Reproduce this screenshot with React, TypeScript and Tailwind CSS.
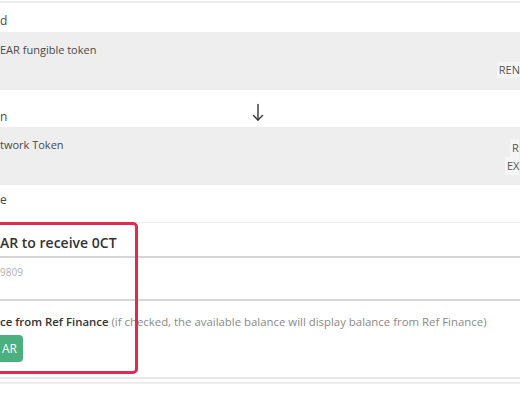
export default function App() {
  return (
    <div className="relative h-[400px] w-[520px] overflow-hidden bg-white font-['Open_Sans',sans-serif] text-[#4a4a4a]">
      <div className="mt-px h-[2px] bg-[#ececec]" />

      {/* first token */}
      <div className="h-[29px] pt-[10px] text-[12px] leading-4">d</div>
      <div className="flex h-[58px] flex-col bg-[#eeeeee] pt-[10px] text-[11px] leading-4">
        <div>EAR fungible token</div>
        <div className="mt-1 flex justify-end">
          <span className="bg-[#f5f5f5] pl-[2px] text-[#555]">REN</span>
        </div>
      </div>

      {/* swap arrow */}
      <div className="grid h-[37px] grid-cols-[1fr_auto_1fr]">
        <div className="self-end pb-[2px] text-[12px] leading-4">n</div>
        <svg
          className="-ml-1 mt-[13px]"
          width="12"
          height="19"
          viewBox="0 0 12 19"
          fill="none"
          stroke="#333"
          strokeWidth="1.4"
          strokeLinecap="round"
          strokeLinejoin="round"
        >
          <path d="M6 1.5v15.5" />
          <path d="M1.5 12.5 6 17l4.5-4.5" />
        </svg>
        <div />
      </div>

      {/* second token */}
      <div className="flex h-[58px] justify-between bg-[#eeeeee] text-[11px]">
        <div className="pt-[10px] leading-4">twork Token</div>
        <div className="flex w-[15px] shrink-0 flex-col items-start pt-[12px] leading-[18px] text-[#555]">
          <span className="ml-[5px] bg-[#f6f6f6] pl-[2px]">R</span>
          <span className="bg-[#f6f6f6] pl-[2px]">EX</span>
        </div>
      </div>

      <div className="h-[37px] pt-[7px] text-[12px] leading-4">e</div>
      <div className="h-px bg-[#efefef]" />

      {/* amount */}
      <div className="h-[33px] pt-[10px] text-[14px] font-semibold leading-5 text-[#333]">
        AR to receive 0CT
      </div>
      <input
        className="block h-[45px] w-full border-y-2 border-[#d6d6d6] pb-[13px] text-[10px] outline-none placeholder:text-[#b0b0b0]"
        placeholder="9809"
      />

      <div className="mt-[13px] whitespace-nowrap text-[11.4px] leading-4">
        <span className="font-semibold text-[#333]">ce from Ref Finance</span>{" "}
        <span className="text-[#8a8a8a]">
          (if checked, the available balance will display balance from Ref Finance)
        </span>
      </div>
      <button className="-ml-2 mt-[5px] h-[27px] rounded bg-[#4caf80] pl-[10px] pr-[6px] text-[12px] text-white">
        AR
      </button>

      <div className="mt-[15px] h-[2px] bg-[#e8e8e8]" />
      <div className="mt-[3px] h-[2px] bg-[#eeeeee]" />

      {/* highlight annotation */}
      <div className="pointer-events-none absolute left-[-10px] top-[222px] h-[152px] w-[148px] rounded-[5px] border-[3px] border-[#dd2b52]" />
    </div>
  );
}
